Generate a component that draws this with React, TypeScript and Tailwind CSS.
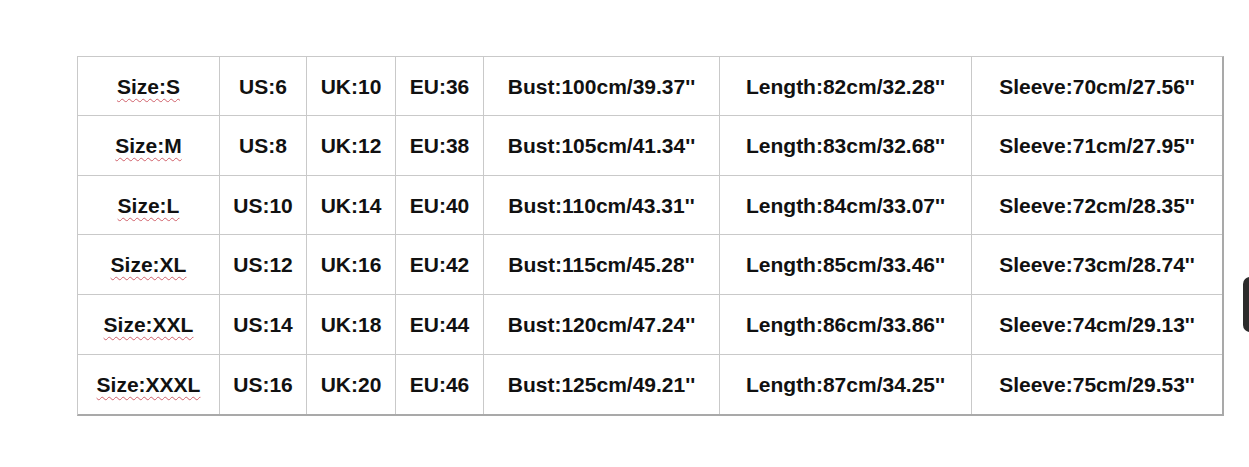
import React from "react";

const rows = [
  ["Size:S", "US:6", "UK:10", "EU:36", "Bust:100cm/39.37''", "Length:82cm/32.28''", "Sleeve:70cm/27.56''"],
  ["Size:M", "US:8", "UK:12", "EU:38", "Bust:105cm/41.34''", "Length:83cm/32.68''", "Sleeve:71cm/27.95''"],
  ["Size:L", "US:10", "UK:14", "EU:40", "Bust:110cm/43.31''", "Length:84cm/33.07''", "Sleeve:72cm/28.35''"],
  ["Size:XL", "US:12", "UK:16", "EU:42", "Bust:115cm/45.28''", "Length:85cm/33.46''", "Sleeve:73cm/28.74''"],
  ["Size:XXL", "US:14", "UK:18", "EU:44", "Bust:120cm/47.24''", "Length:86cm/33.86''", "Sleeve:74cm/29.13''"],
  ["Size:XXXL", "US:16", "UK:20", "EU:46", "Bust:125cm/49.21''", "Length:87cm/34.25''", "Sleeve:75cm/29.53''"],
];

const rowH = ["h-[59px]", "h-[60px]", "h-[59px]", "h-[60px]", "h-[60px]", "h-[59px]"];

export default function App() {
  return (
    <div
      className="relative w-[1249px] h-[467px] bg-white overflow-hidden"
      style={{ fontFamily: '"Liberation Sans", Arial, sans-serif' }}
    >
      <div className="pt-[56px] pl-[77px]">
        <div className="w-[1147px] border-t border-l border-[#c9c9c9] border-r-2 border-r-[#a9a9a9] border-b-2 border-b-[#a9a9a9]">
          <div className="grid grid-cols-[142px_87px_89px_88px_236px_252px_250px]">
            {rows.map((r, i) =>
              r.map((c, j) => (
                <div
                  key={`${i}-${j}`}
                  className={`${rowH[i]} flex items-center justify-center ${j < 6 ? "border-r border-[#c9c9c9]" : ""} ${i < 5 ? "border-b border-[#c9c9c9]" : ""} text-[21px] font-bold text-[#111] leading-none whitespace-nowrap`}
                >
                  {j === 0 ? (
                    <span className="underline decoration-wavy decoration-[#d0606a] decoration-1 underline-offset-[4px]">
                      {c}
                    </span>
                  ) : (
                    c
                  )}
                </div>
              ))
            )}
          </div>
        </div>
      </div>
      <div className="absolute left-[1243px] top-[277px] w-[12px] h-[55px] rounded-l-[7px] bg-[#2b2b2b]" />
    </div>
  );
}
